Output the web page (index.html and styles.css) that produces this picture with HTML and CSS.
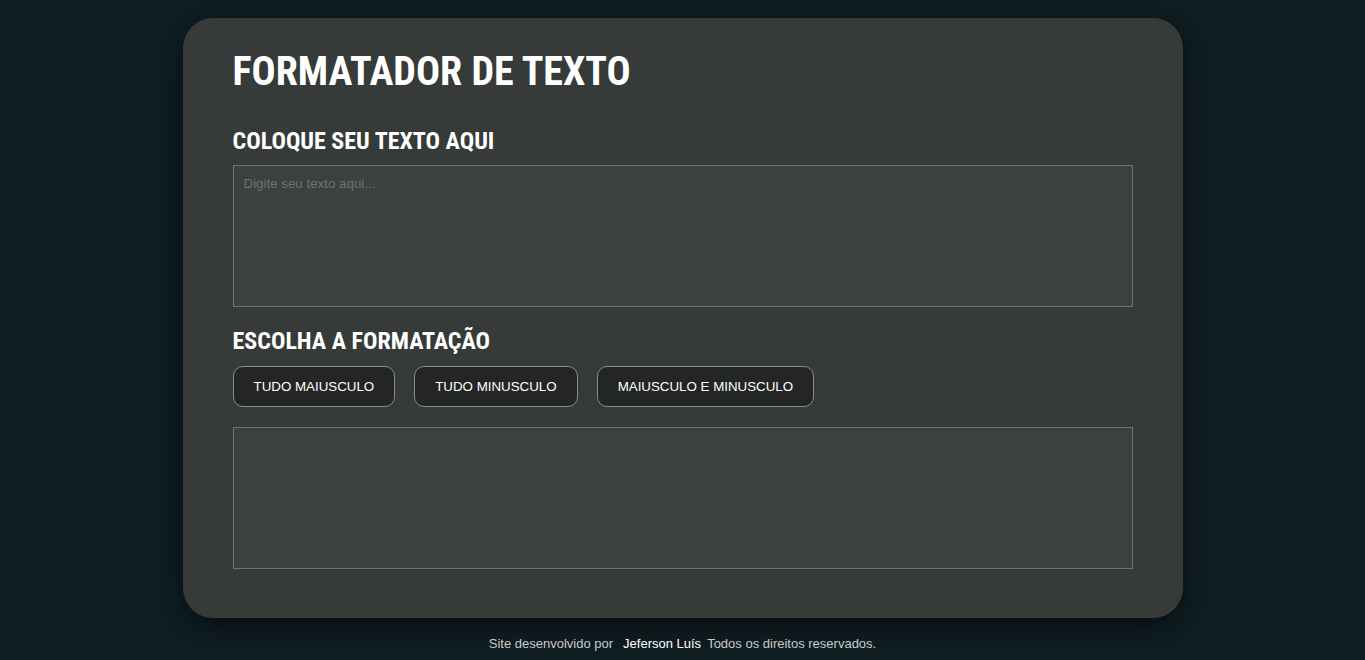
FILE: index.html
```html
<!DOCTYPE html>
<html lang="pt-BR">
<head>
<meta charset="utf-8">
<title>Formatador de Texto</title>
<link rel="stylesheet" href="styles.css">
</head>
<body>
<main class="card">
  <h1 class="title">FORMATADOR DE TEXTO</h1>
  <h2 class="subtitle">COLOQUE SEU TEXTO AQUI</h2>
  <textarea class="box" placeholder="Digite seu texto aqui..."></textarea>
  <h2 class="subtitle subtitle-second">ESCOLHA A FORMATAÇÃO</h2>
  <div class="buttons">
    <button class="btn">TUDO MAIUSCULO</button>
    <button class="btn">TUDO MINUSCULO</button>
    <button class="btn">MAIUSCULO E MINUSCULO</button>
  </div>
  <textarea class="box box-result" readonly></textarea>
</main>
<footer class="footer">
  <span>Site desenvolvido por</span>
  <strong class="author">Jeferson Luís</strong>
  <span>Todos os direitos reservados.</span>
</footer>
</body>
</html>
```
FILE: styles.css
```css
* { box-sizing: border-box; }
html, body { margin: 0; padding: 0; }
body {
  background: #0f1e23;
  font-family: "Liberation Sans", Arial, sans-serif;
  color: #fff;
  display: flex;
  flex-direction: column;
  align-items: center;
  padding-top: 18px;
  min-height: 660px;
}
.card {
  width: 1000px;
  height: 600px;
  background: #363a38;
  border-radius: 30px;
  padding: 30px 50px 0;
  box-shadow: 0 8px 30px rgba(0, 0, 0, 0.55);
  display: flex;
  flex-direction: column;
}
.title {
  font-family: Roboto, sans-serif;
  font-stretch: 75%;
  font-weight: 700;
  font-size: 40px;
  line-height: 48px;
  margin: 0 0 31px;
}
.subtitle {
  font-family: Roboto, sans-serif;
  font-stretch: 75%;
  font-weight: 700;
  font-size: 24px;
  line-height: 29px;
  margin: 0 0 9px;
}
.subtitle-second { margin-top: 20px; margin-bottom: 10px; }
.box {
  display: block;
  width: 900px;
  height: 142px;
  background: #3c403e;
  border: 1px solid #707371;
  color: #fff;
  font-family: "Liberation Sans", Arial, sans-serif;
  font-size: 13.333px;
  padding: 10px 10px;
  resize: none;
  outline: none;
}
.box::placeholder { color: #6f7371; }
.buttons {
  display: flex;
  gap: 19px;
  margin-bottom: 20px;
}
.btn {
  height: 41px;
  padding: 0 20px;
  background: #232625;
  color: #fff;
  border: 1px solid #8a8d8c;
  border-radius: 10px;
  font-family: "Liberation Sans", Arial, sans-serif;
  font-size: 13.333px;
  cursor: pointer;
}
.footer {
  margin-top: 18px;
  font-size: 13px;
  color: #c9cccc;
  display: flex;
  gap: 6px;
}
.author { color: #fff; font-weight: 400; margin-left: 4px; }
```
